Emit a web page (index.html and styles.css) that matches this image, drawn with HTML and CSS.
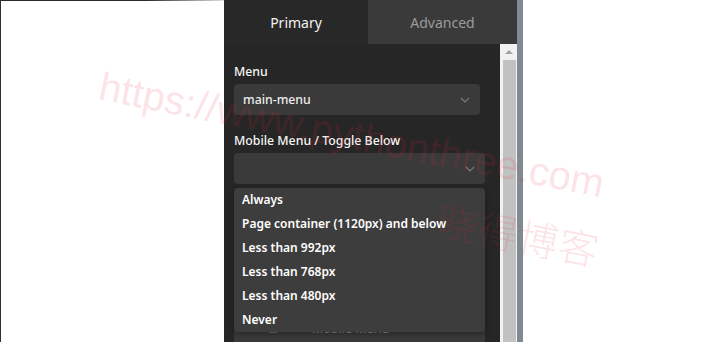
FILE: index.html
```html
<!DOCTYPE html>
<html lang="en">
<head>
    <meta charset="utf-8">
    <title>Menu settings</title>
    <link rel="stylesheet" href="styles.css">
</head>
<body>
    <div class="page">
        <div class="canvas canvas-left"></div>

        <aside class="panel">
            <div class="panel-main">
                <div class="tabs">
                    <button class="tab active" type="button">Primary</button>
                    <button class="tab" type="button">Advanced</button>
                </div>

                <div class="panel-body">
                    <div class="fields">
                        <!-- Menu -->
                        <label class="field-label">Menu</label>
                        <div class="select select-short">
                            <span class="select-value">main-menu</span>
                            <svg class="chevron" width="10" height="6" viewBox="0 0 10 6"><path d="M1 1l4 4 4-4" fill="none" stroke="#7a7a7a" stroke-width="1.2"/></svg>
                        </div>

                        <!-- Mobile Menu / Toggle Below -->
                        <label class="field-label spaced">Mobile Menu / Toggle Below</label>
                        <div class="select-wrap">
                            <div class="select">
                                <span class="select-value"></span>
                                <svg class="chevron" width="10" height="6" viewBox="0 0 10 6"><path d="M1 1l4 4 4-4" fill="none" stroke="#7a7a7a" stroke-width="1.2"/></svg>
                            </div>
                            <ul class="options">
                                <li>Always</li>
                                <li>Page container (1120px) and below</li>
                                <li>Less than 992px</li>
                                <li>Less than 768px</li>
                                <li>Less than 480px</li>
                                <li>Never</li>
                            </ul>
                        </div>

                        <!-- Campo tapado por la lista -->
                        <div class="select select-icon">
                            <svg class="field-icon" width="10" height="10" viewBox="0 0 10 10"><path d="M1 4h8v4H1z" fill="none" stroke="#9a9a9a" stroke-width="1"/></svg>
                            <span class="select-value dim">Mobile Menu</span>
                            <svg class="chevron" width="10" height="6" viewBox="0 0 10 6"><path d="M1 1l4 4 4-4" fill="none" stroke="#7a7a7a" stroke-width="1.2"/></svg>
                        </div>
                    </div>

                    <div class="scrollbar">
                        <div class="scroll-arrow"></div>
                        <div class="scroll-thumb"></div>
                    </div>
                </div>
            </div>
            <div class="panel-edge"></div>
        </aside>

        <div class="canvas"></div>
    </div>

    <div class="watermark">
        <span class="wm-url">https://www.pythonthree.com</span>
        <span class="wm-name">晓得博客</span>
    </div>
</body>
</html>
```

FILE: styles.css
```css
/* Estilos generales */
body {
    margin: 0;
    font-family: "Noto Sans", "Open Sans", sans-serif;
    background-color: #fff;
    overflow: hidden;
}

.page {
    display: flex;
    height: 342px;
}

/* Lienzo blanco */
.canvas {
    flex: 1;
    background-color: #fff;
}

.canvas-left {
    flex: 0 0 223px;
    border-left: 1px solid #2f2f2f;
    background-image: linear-gradient(to right, #2a2a2a 0, #2a2a2a 145px, #e6e6e6 225px);
    background-size: 100% 1px;
    background-repeat: no-repeat;
}

/* Panel lateral */
.panel {
    display: flex;
    width: 299px;
    background-color: #282828;
}

.panel-main {
    flex: 1;
    display: flex;
    flex-direction: column;
}

.panel-edge {
    width: 6px;
    background-color: #818a93;
}

/* Pestañas */
.tabs {
    display: flex;
    height: 44px;
}

.tab {
    border: none;
    background-color: #282828;
    color: #f2f2f2;
    font-family: inherit;
    font-size: 14px;
    font-weight: 400;
    padding: 0;
    width: 144px;
}

.tab + .tab {
    flex: 1;
    background-color: #3a3a3a;
    color: #9a9a9a;
}

.panel-body {
    flex: 1;
    display: flex;
    min-height: 0;
}

/* Campos */
.fields {
    flex: 1;
    padding: 19px 15px 0 10px;
    background-color: #262626;
}

.field-label {
    display: block;
    color: #f5f5f5;
    font-size: 12.3px;
    font-weight: 500;
    line-height: 18px;
    margin-bottom: 3px;
}

.field-label.spaced {
    margin-top: 17px;
}

.select {
    display: flex;
    align-items: center;
    height: 31px;
    padding: 0 10px 0 9px;
    background-color: #3a3a3a;
    border-radius: 4px;
}

.select-short {
    margin-right: 5px;
}

.select-value {
    flex: 1;
    color: #ececec;
    font-size: 12.3px;
    font-weight: 500;
}

.select-value.dim {
    color: #8a8a8a;
}

.chevron {
    flex: none;
}

.select-wrap {
    position: relative;
}

/* Lista desplegable */
.options {
    position: absolute;
    top: 35px;
    left: 0;
    right: 0;
    z-index: 2;
    margin: 0;
    padding: 0;
    list-style: none;
    background-color: #3d3d3d;
    border-radius: 4px;
    box-shadow: 0 2px 6px rgba(0, 0, 0, 0.35);
}

.options li {
    height: 24px;
    line-height: 24px;
    padding-left: 8px;
    color: #fff;
    font-size: 12px;
    font-weight: 600;
}

.select-icon {
    margin-top: 129px;
    padding-left: 34px;
}

.field-icon {
    margin-right: 34px;
}

/* Barra de desplazamiento */
.scrollbar {
    width: 17px;
    background-color: #f1f1f1;
    display: flex;
    flex-direction: column;
}

.scroll-arrow {
    height: 16px;
    display: flex;
    align-items: center;
    justify-content: center;
}

.scroll-arrow::before {
    content: "";
    border-left: 4px solid transparent;
    border-right: 4px solid transparent;
    border-bottom: 4px solid #a3a3a3;
}

.scroll-thumb {
    flex: 1;
    margin: 0 1px 0 3px;
    background-color: #c1c1c1;
}

/* Marca de agua */
.watermark {
    position: absolute;
    inset: 0;
    pointer-events: none;
    z-index: 5;
    color: rgba(235, 40, 60, 0.14);
    font-family: "Liberation Sans", Arial, "Noto Sans CJK SC", sans-serif;
}

.wm-url {
    position: absolute;
    left: 104px;
    top: 64px;
    font-size: 40px;
    white-space: nowrap;
    transform: rotate(11deg);
    transform-origin: left top;
}

.wm-name {
    position: absolute;
    left: 444px;
    top: 190px;
    font-family: "Noto Sans CJK SC", sans-serif;
    font-size: 40px;
    font-weight: 300;
    letter-spacing: 1px;
    white-space: nowrap;
    transform: rotate(11deg);
    transform-origin: left top;
}
```
